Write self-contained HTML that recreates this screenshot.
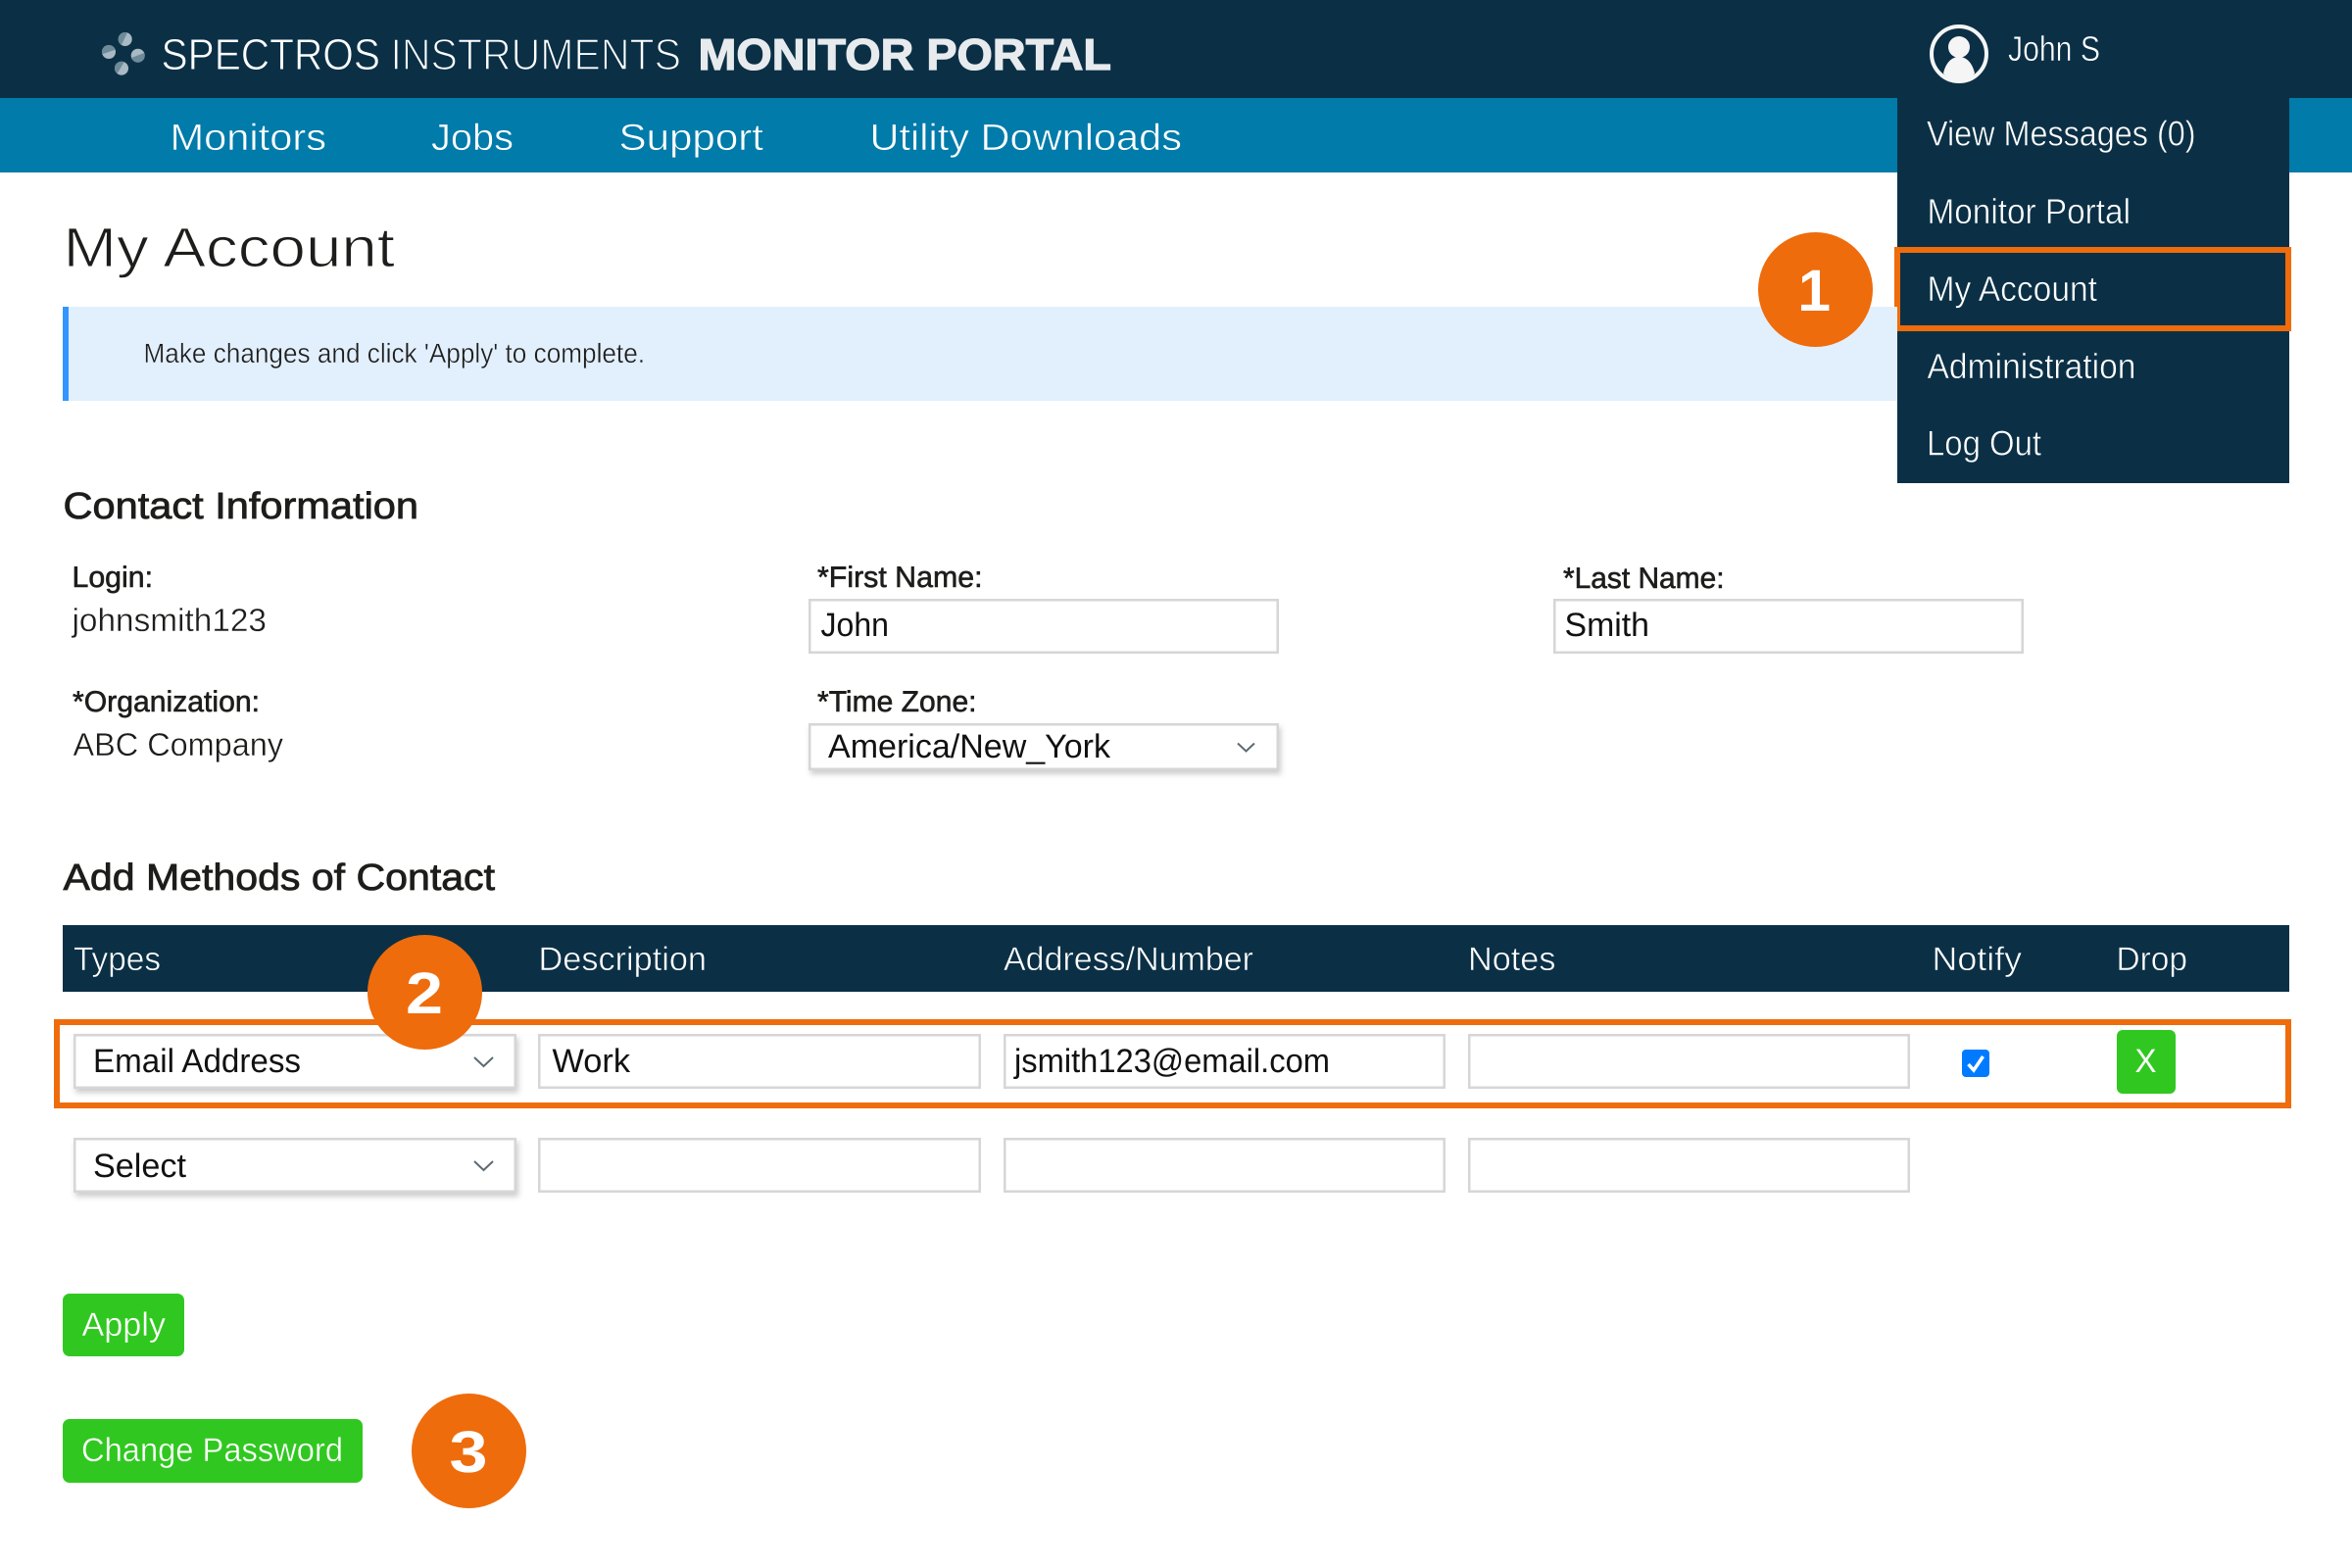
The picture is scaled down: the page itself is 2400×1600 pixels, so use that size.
<!DOCTYPE html>
<html lang="en">
<head>
<meta charset="utf-8">
<title>My Account - Spectros Instruments Monitor Portal</title>
<style>
html,body{margin:0;padding:0;background:#fff;width:2400px;height:1600px;overflow:hidden}
svg{display:block}
text{font-family:"Liberation Sans",sans-serif;text-rendering:geometricPrecision;white-space:pre}
.w{fill:#fff}
.thinN{stroke:#007baa;stroke-width:.6}
.thinH{stroke:#0b3046;stroke-width:.6}
.d{fill:#1d1d1b}
.lbl{font-size:30px;fill:#1d1d1b;stroke:#1d1d1b;stroke-width:.6}
.val{font-size:33px;fill:#1d1d1b;stroke:#fff;stroke-width:.4}
.inp{font-size:34px;fill:#111}
.nav{font-size:38px;fill:#fff}
.menu{font-size:36px;fill:#fff}
.th{font-size:34px;fill:#fff}
.num{font-size:60px;font-weight:bold;fill:#fff}
.box{fill:#fff;stroke:#d6d6d6;stroke-width:2.500}
.or{fill:none;stroke:#ee6c0c;stroke-width:6}
.chev{fill:none;stroke:#5d6a72;stroke-width:2}
</style>
</head>
<body>
<svg width="2400" height="1600" viewBox="0 0 2400 1600" xmlns="http://www.w3.org/2000/svg">
<defs>
<filter id="sh" x="-5%" y="-20%" width="110%" height="150%"><feDropShadow dx="2" dy="4" stdDeviation="3" flood-color="#000" flood-opacity=".2"/></filter>
<clipPath id="l1"><circle cx="127.700" cy="40" r="7"/></clipPath>
<clipPath id="l2"><circle cx="111" cy="53" r="7"/></clipPath>
<clipPath id="l3"><circle cx="140.700" cy="56.700" r="7"/></clipPath>
<clipPath id="l4"><circle cx="124" cy="69.700" r="7"/></clipPath>
</defs>

<!-- header -->
<rect x="0" y="0" width="2400" height="100" fill="#0b3046"/>
<rect x="0" y="100" width="2400" height="76" fill="#007baa"/>

<!-- logo -->
<circle cx="127.700" cy="40" r="7" fill="#a9bac4"/><path d="M131 31L122 50L118 40L122 31Z" fill="#6f8a98" clip-path="url(#l1)"/>
<circle cx="111" cy="53" r="7" fill="#a9bac4"/><path d="M102 44H120L120 50L102 56Z" fill="#6f8a98" clip-path="url(#l2)"/>
<circle cx="140.700" cy="56.700" r="7" fill="#a9bac4"/><path d="M131 60L150 53V66H131Z" fill="#6f8a98" clip-path="url(#l3)"/>
<circle cx="124" cy="69.700" r="7" fill="#a9bac4"/><path d="M128 61L118 78L114 70L118 61Z" fill="#6f8a98" clip-path="url(#l4)"/>

<text x="164.500" y="71" font-size="45" fill="#fff" stroke="#0b3046" stroke-width=".9" textLength="223.500" lengthAdjust="spacingAndGlyphs">SPECTROS</text>
<text x="398.500" y="71" font-size="45" fill="#fff" stroke="#0b3046" stroke-width="1.500" textLength="296.500" lengthAdjust="spacingAndGlyphs">INSTRUMENTS</text>
<text x="712.500" y="71" font-size="45" font-weight="bold" fill="#e8ebee" stroke="#e8ebee" stroke-width="1.200" textLength="421.500" lengthAdjust="spacingAndGlyphs">MONITOR PORTAL</text>

<!-- nav -->
<text class="nav thinN" x="173.500" y="153" textLength="159.500" lengthAdjust="spacingAndGlyphs">Monitors</text>
<text class="nav thinN" x="440" y="153" textLength="84" lengthAdjust="spacingAndGlyphs">Jobs</text>
<text class="nav thinN" x="631.500" y="153" textLength="147.500" lengthAdjust="spacingAndGlyphs">Support</text>
<text class="nav thinN" x="887.500" y="153" textLength="318.500" lengthAdjust="spacingAndGlyphs">Utility Downloads</text>

<!-- user -->
<circle cx="1999" cy="55" r="28" fill="none" stroke="#f5f5f5" stroke-width="4"/>
<circle cx="1999" cy="48" r="11" fill="#f5f5f5"/>
<path d="M1983 75C1985 65 1991 58 1999 58C2007 58 2013 65 2015 75C2011 80 2005 83 1999 83C1993 83 1987 80 1983 75Z" fill="#f5f5f5"/>
<text class="menu thinH" x="2049" y="62" font-size="35" textLength="94" lengthAdjust="spacingAndGlyphs">John S</text>

<!-- dropdown -->
<rect x="1936" y="100" width="400" height="393" fill="#0b3046"/>
<text class="menu thinH" x="1966" y="148.500" textLength="274.500" lengthAdjust="spacingAndGlyphs">View Messages (0)</text>
<text class="menu thinH" x="1966.500" y="228" textLength="207.500" lengthAdjust="spacingAndGlyphs">Monitor Portal</text>
<text class="menu thinH" x="1966.500" y="307" textLength="173.500" lengthAdjust="spacingAndGlyphs">My Account</text>
<text class="menu thinH" x="1966.500" y="386" textLength="213" lengthAdjust="spacingAndGlyphs">Administration</text>
<text class="menu thinH" x="1966" y="464.500" textLength="117" lengthAdjust="spacingAndGlyphs">Log Out</text>
<rect class="or" x="1936" y="255" width="399" height="80"/>

<!-- heading + banner -->
<text x="64.500" y="272" font-size="57" fill="#1d1d1b" stroke="#fff" stroke-width="1.100" textLength="338.500" lengthAdjust="spacingAndGlyphs">My Account</text>
<rect x="64" y="313" width="1872" height="96" fill="#e2effd"/>
<rect x="64" y="313" width="6" height="96" fill="#3396ff"/>
<text x="146.500" y="370" font-size="28" fill="#1d1d1b" stroke="#e2effd" stroke-width=".4" textLength="511.500" lengthAdjust="spacingAndGlyphs">Make changes and click 'Apply' to complete.</text>

<circle cx="1852.500" cy="295.500" r="58.500" fill="#ee6c0c"/>
<text class="num" x="1835" y="317" textLength="33" lengthAdjust="spacingAndGlyphs">1</text>
<rect x="1838" y="311" width="28" height="6" fill="#fff"/>

<!-- contact info -->
<text x="64.500" y="529" font-size="38" class="d" stroke="#1d1d1b" stroke-width=".8" textLength="362.500" lengthAdjust="spacingAndGlyphs">Contact Information</text>

<text class="lbl" x="73.500" y="599" textLength="82.500" lengthAdjust="spacingAndGlyphs">Login:</text>
<text class="val" x="73.500" y="644" textLength="198.500" lengthAdjust="spacingAndGlyphs">johnsmith123</text>
<text class="lbl" x="74" y="726" textLength="191" lengthAdjust="spacingAndGlyphs">*Organization:</text>
<text class="val" x="74.500" y="771" textLength="214.500" lengthAdjust="spacingAndGlyphs">ABC Company</text>

<text class="lbl" x="834" y="599" textLength="168.500" lengthAdjust="spacingAndGlyphs">*First Name:</text>
<rect class="box" x="826.250" y="612.250" width="477.500" height="53.500"/>
<text class="inp" x="837.500" y="649" textLength="69.500" lengthAdjust="spacingAndGlyphs">John</text>

<text class="lbl" x="834" y="726" textLength="162.500" lengthAdjust="spacingAndGlyphs">*Time Zone:</text>
<rect class="box" x="826.250" y="739.250" width="477.500" height="45.500" filter="url(#sh)"/>
<text class="inp" x="845" y="773" textLength="288" lengthAdjust="spacingAndGlyphs">America/New_York</text>
<path class="chev" d="M1263 758.500L1271.500 766.500L1280 758.500"/>

<text class="lbl" x="1595" y="600" textLength="164.500" lengthAdjust="spacingAndGlyphs">*Last Name:</text>
<rect class="box" x="1586.250" y="612.250" width="477.500" height="53.500"/>
<text class="inp" x="1596.500" y="649" textLength="86.500" lengthAdjust="spacingAndGlyphs">Smith</text>

<!-- methods -->
<text x="64.500" y="908" font-size="38" class="d" stroke="#1d1d1b" stroke-width=".8" textLength="440.500" lengthAdjust="spacingAndGlyphs">Add Methods of Contact</text>
<rect x="64" y="944" width="2272" height="68" fill="#0b3046"/>
<text class="th thinH" x="75" y="990" textLength="89" lengthAdjust="spacingAndGlyphs">Types</text>
<text class="th thinH" x="549.500" y="990" textLength="171.500" lengthAdjust="spacingAndGlyphs">Description</text>
<text class="th thinH" x="1024" y="990" textLength="255" lengthAdjust="spacingAndGlyphs">Address/Number</text>
<text class="th thinH" x="1498" y="990" textLength="89.500" lengthAdjust="spacingAndGlyphs">Notes</text>
<text class="th thinH" x="1971.500" y="990" textLength="91.500" lengthAdjust="spacingAndGlyphs">Notify</text>
<text class="th thinH" x="2159.500" y="990" textLength="72.500" lengthAdjust="spacingAndGlyphs">Drop</text>

<!-- row 1 -->
<rect class="or" x="58" y="1043" width="2277" height="85"/>
<rect class="box" x="76.250" y="1056.250" width="449.500" height="53.500" filter="url(#sh)"/>
<text class="inp" x="95" y="1094" textLength="212" lengthAdjust="spacingAndGlyphs">Email Address</text>
<path class="chev" d="M484 1079L493.500 1088L503 1079"/>
<rect class="box" x="550.250" y="1056.250" width="449.500" height="53.500"/>
<text class="inp" x="563.500" y="1094" textLength="79.500" lengthAdjust="spacingAndGlyphs">Work</text>
<rect class="box" x="1025.250" y="1056.250" width="448.500" height="53.500"/>
<text class="inp" x="1035" y="1094" textLength="322" lengthAdjust="spacingAndGlyphs">jsmith123@email.com</text>
<rect class="box" x="1499.250" y="1056.250" width="448.500" height="53.500"/>
<rect x="2002" y="1071" width="28" height="28" rx="4" fill="#007bff"/>
<path d="M2008.500 1086L2014 1092L2023.500 1078" fill="none" stroke="#fff" stroke-width="3.500"/>
<rect x="2160" y="1051" width="60" height="65" rx="6" fill="#30c820"/>
<text x="2178.500" y="1094" font-size="34" fill="#fff" textLength="22" lengthAdjust="spacingAndGlyphs">X</text>

<!-- row 2 -->
<rect class="box" x="76.250" y="1162.250" width="449.500" height="53.500" filter="url(#sh)"/>
<text class="inp" x="95" y="1201" textLength="95" lengthAdjust="spacingAndGlyphs">Select</text>
<path class="chev" d="M484 1185L493.500 1194L503 1185"/>
<rect class="box" x="550.250" y="1162.250" width="449.500" height="53.500"/>
<rect class="box" x="1025.250" y="1162.250" width="448.500" height="53.500"/>
<rect class="box" x="1499.250" y="1162.250" width="448.500" height="53.500"/>

<circle cx="433.500" cy="1012.500" r="58.500" fill="#ee6c0c"/>
<text class="num" x="414" y="1034" textLength="38" lengthAdjust="spacingAndGlyphs">2</text>

<!-- buttons -->
<rect x="64" y="1320" width="124" height="64" rx="7" fill="#30c820"/>
<text x="83.500" y="1363" font-size="34" fill="#fff" stroke="#30c820" stroke-width=".4" textLength="85.500" lengthAdjust="spacingAndGlyphs">Apply</text>
<rect x="64" y="1448" width="306" height="65" rx="7" fill="#30c820"/>
<text x="83" y="1491" font-size="34" fill="#fff" stroke="#30c820" stroke-width=".4" textLength="267" lengthAdjust="spacingAndGlyphs">Change Password</text>
<circle cx="478.500" cy="1480.500" r="58.500" fill="#ee6c0c"/>
<text class="num" x="458.500" y="1502" textLength="39" lengthAdjust="spacingAndGlyphs">3</text>
</svg>
</body>
</html>
